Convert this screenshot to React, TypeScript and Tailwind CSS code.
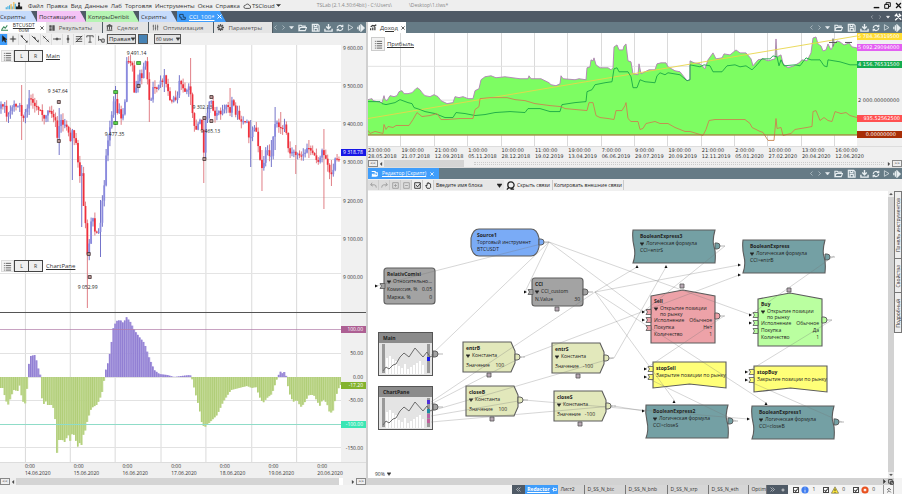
import clsx from 'clsx';
import type { ReactNode } from 'react';

type Point = [number, number];

const STEP = 1.883;
const PRICE_TOP = 45;
const PRICE_HEIGHT = 267;
const CCI_TOP = 313;
const CCI_HEIGHT = 149;
const CCI_ZERO = 377;

const GRID_X = [25, 70, 115, 161, 206, 252, 297];

const PRICE_PATH: Point[] = [
  [0, 107], [4, 104], [7, 118], [11, 110], [13, 105], [20, 107], [22, 119], [27, 112], [30, 94], [33, 103],
  [37, 108], [41, 110], [44, 119], [48, 110], [52, 112], [56, 121], [58, 141], [60, 118], [63, 125], [68, 127],
  [71, 141], [73, 127], [75, 144], [77, 143], [79, 178], [82, 172], [83, 211], [85, 201], [87, 258], [89, 250],
  [91, 224], [93, 218], [96, 238], [98, 230], [100, 237], [102, 202], [104, 197], [106, 161], [108, 136], [109, 146],
  [111, 114], [113, 113], [115, 92], [117, 112], [120, 111], [122, 123], [125, 108], [127, 60], [130, 61], [133, 65],
  [134, 95], [136, 88], [138, 82], [140, 71], [143, 80], [145, 58], [147, 63], [149, 103], [152, 98], [154, 84],
  [158, 89], [160, 79], [163, 82], [165, 74], [168, 91], [172, 104], [175, 95], [177, 102], [180, 79], [182, 83],
  [185, 90], [188, 90], [190, 83], [192, 105], [194, 117], [196, 133], [199, 121], [202, 120], [204, 159], [206, 119],
  [208, 115], [210, 101], [212, 99], [214, 110], [216, 117], [219, 109], [221, 117], [223, 110], [226, 106], [229, 106],
  [230, 117], [232, 100], [235, 109], [237, 116], [239, 109], [241, 125], [244, 120], [248, 123], [250, 143], [252, 132],
  [256, 125], [258, 140], [260, 150], [262, 170], [264, 168], [266, 152], [268, 150], [271, 160], [273, 150], [275, 126],
  [278, 124], [280, 128], [283, 128], [285, 125], [288, 138], [290, 155], [293, 150], [296, 156], [299, 152], [302, 158],
  [306, 151], [308, 148], [312, 151], [315, 153], [318, 162], [321, 160], [323, 151], [325, 157], [328, 162], [331, 175],
  [333, 172], [335, 168], [337, 155], [339, 164], [341, 150],
];

// x, high, low of the bars with a long shadow
const LONG_WICKS: [number, number, number][] = [
  [22, 85, 140], [30, 90, 115], [59, 108, 155], [73, 130, 180], [82, 165, 227], [88, 220, 308], [101, 200, 257],
  [115, 86, 125], [150, 80, 122], [165, 69, 92], [192, 58, 105], [205, 118, 183], [230, 88, 110], [252, 120, 167],
  [262, 150, 191], [272, 140, 167], [275, 107, 150], [281, 112, 134], [296, 145, 174], [309, 140, 158],
  [324, 129, 209], [332, 160, 186],
];

const CCI_PATH: Point[] = [
  [0, 388], [3, 388], [5, 396], [8, 406], [12, 395], [14, 390], [18, 391], [20, 385], [22, 397], [25, 406],
  [27, 395], [28, 378], [29, 365], [31, 356], [35, 355], [37, 361], [39, 370], [41, 376], [42, 397], [45, 406],
  [46, 401], [48, 405], [53, 405], [55, 413], [56, 423], [57, 457], [59, 440], [63, 440], [65, 442], [67, 438],
  [69, 435], [71, 442], [73, 432], [75, 436], [78, 447], [80, 443], [82, 445], [84, 434], [86, 430], [88, 420],
  [92, 408], [97, 405], [100, 400], [103, 391], [105, 378], [106, 371], [108, 365], [111, 350], [114, 328], [117, 321],
  [121, 320], [124, 323], [127, 317], [131, 322], [135, 330], [140, 337], [145, 343], [150, 358], [155, 370], [160, 374],
  [168, 375], [175, 377], [182, 376], [191, 375], [193, 379], [196, 392], [200, 408], [203, 425], [206, 427], [212, 421],
  [218, 415], [224, 402], [232, 390], [240, 388], [248, 386], [253, 388], [257, 387], [261, 398], [264, 403], [268, 398],
  [273, 394], [276, 385], [279, 376], [282, 371], [284, 374], [286, 371], [288, 379], [290, 392], [294, 402], [298, 400],
  [302, 407], [305, 404], [310, 395], [315, 395], [321, 406], [324, 399], [328, 403], [331, 413], [334, 412], [337, 397],
  [341, 385],
];

const EQUITY =
  '368,100 372,99 373,101 377,102 382,103 384,96 385,100 387,101 390,96 394,97 397,96 399,92 402,91 404,94 408,94 412,93 415,90 417,88 420,90 422,93 425,96 430,97 434,95 438,97 441,101 447,104 453,103 455,97 459,98 463,97 468,99 473,99 475,91 479,89 481,80 485,77 491,76 496,78 505,77 520,79 528,79 529,76 531,79 541,79 545,81 549,83 551,85 556,86 560,84 561,76 563,79 575,80 579,79 586,80 587,68 590,67 591,60 593,61 594,58 596,65 600,68 608,68 611,70 613,68 614,47 617,45 619,50 623,50 624,46 626,44 628,61 631,62 633,74 638,75 639,64 641,74 645,72 649,70 655,70 657,64 661,63 666,63 668,67 675,71 680,72 684,77 687,81 690,80 690,61 694,63 700,64 705,69 708,60 713,53 716,59 722,58 724,54 730,55 736,50 740,53 746,53 751,59 753,66 758,60 763,59 768,61 775,59 776,39 777,57 781,55 783,64 788,68 794,66 799,63 802,60 807,61 811,53 813,38 816,37 818,44 821,46 823,51 826,50 828,44 831,50 834,44 837,41 840,42 844,45 849,43 852,47 857,48';

const LONG_PROFIT =
  '368,102 380,102 382,104 386,105 395,103 400,100 408,103 412,104 414,108 420,110 425,112 435,114 445,118 453,118 456,113 465,114 475,116 485,115 495,113 510,112 525,113 528,109 540,109 550,112 560,112 562,105 575,103 586,102 587,92 592,90 595,85 605,83 612,82 614,69 617,68 619,72 628,72 631,77 633,88 637,88 640,80 645,82 655,83 657,76 660,73 665,75 668,73 680,75 687,81 690,80 690,65 700,67 704,65 710,66 713,72 722,72 727,66 735,65 740,67 746,66 752,70 757,65 762,59 770,59 773,56 777,57 779,66 781,60 784,66 795,65 800,66 806,58 811,60 820,60 824,66 827,67 828,60 840,62 850,65 857,65';

const SHORT_PROFIT =
  '368,131 370,134 375,132 383,134 384,125 386,130 388,127 393,128 396,126 409,126 413,120 417,113 422,117 430,116 437,114 441,120 447,120 460,119 473,119 475,110 479,107 480,99 490,98 507,98 515,100 525,101 535,104 550,106 561,107 565,109 587,111 589,103 593,103 596,116 600,118 608,119 614,120 616,111 622,111 625,106 626,103 628,119 631,122 638,122 640,130 643,129 646,124 655,122 660,124 668,124 675,128 685,132 690,132 703,136 706,130 709,121 715,120 730,120 745,120 750,124 752,128 760,132 763,133 768,141 774,141 776,119 777,129 781,128 783,136 791,134 795,130 807,128 812,127 813,112 816,111 820,121 824,118 828,121 832,122 835,112 841,114 846,113 850,116 857,118';

const DATES_LEFT = ['14.06.2020', '15.06.2020', '16.06.2020', '17.06.2020', '18.06.2020', '19.06.2020', '20.06.2020'];

const DATES_RIGHT = [
  ['23:00:00', '28.05.2018'], ['19:00:00', '21.07.2018'], ['21:00:00', '12.09.2018'], ['1:00:00', '05.11.2018'],
  ['10:00:00', '28.12.2018'], ['11:00:00', '19.02.2019'], ['19:00:00', '13.04.2019'], ['7:00:00', '06.06.2019'],
  ['9:00:00', '29.07.2019'], ['19:00:00', '20.09.2019'], ['21:00:00', '12.11.2019'], ['2:00:00', '05.01.2020'],
  ['10:00:00', '27.02.2020'], ['13:00:00', '20.04.2020'], ['16:00:00', '12.06.2020'],
];

const valueAt = (points: Point[], x: number) => {
  const next = points.findIndex(([px]) => px >= x);
  if (next <= 0) return points[next === 0 ? 0 : points.length - 1][1];
  const [x0, y0] = points[next - 1];
  const [x1, y1] = points[next];
  return y0 + ((y1 - y0) * (x - x0)) / (x1 - x0);
};

// cheap repeatable noise for the candle shadows
const noise = (i: number) => Math.abs(Math.sin(i * 12.9898) * 43758.5453) % 1;

const candles = Array.from({ length: 181 }, (_, i) => {
  const x = i * STEP + 1;
  const close = valueAt(PRICE_PATH, x) + (noise(i) - 0.5) * 4;
  const open = valueAt(PRICE_PATH, Math.max(0, x - STEP)) + (noise(i - 1) - 0.5) * 4;
  const wick = LONG_WICKS.find(([wx]) => Math.abs(wx - x) < STEP / 2);
  const top = Math.min(open, close);
  const bottom = Math.max(open, close);
  return {
    x,
    top,
    bottom,
    high: Math.min(top - noise(i + 40) * 7, wick ? wick[1] : 999),
    low: Math.max(bottom + noise(i + 80) * 7, wick ? wick[2] : 0),
    falling: close > open,
  };
});

const cciBars = Array.from({ length: 182 }, (_, i) => ({ x: i * STEP, y: valueAt(CCI_PATH, i * STEP + 1) }));

/* ---------- icons ---------- */

const Icon = ({ children, className, box = 10 }: { children: ReactNode; className?: string; box?: number }) => (
  <svg
    viewBox={`0 0 ${box} ${box}`}
    className={clsx('shrink-0', className ?? 'size-[9px]')}
    fill="none"
    stroke="currentColor"
    strokeWidth="1"
    aria-hidden="true"
  >
    {children}
  </svg>
);

const ListIcon = () => (
  <Icon className="size-[9px]">
    <path d="M1 1.5h1M1 4h1M1 6.5h1M1 9h1M3 1.5h6M3 4h6M3 6.5h6M3 9h6" />
  </Icon>
);

const PanelActions = () => (
  <div className="flex items-center gap-[3px] pr-[1px] text-[#e8eef1]">
    <button aria-label="Назад"><Icon className="size-[5px]"><path d="M7 1L3 5l4 4" /></Icon></button>
    <button aria-label="Вперёд"><Icon className="size-[5px]"><path d="M3 1l4 4-4 4" /></Icon></button>
    <button aria-label="Список"><Icon className="size-[5px]"><path d="M1 3h8L5 8z" fill="currentColor" /></Icon></button>
    <button aria-label="Открыть" className="ml-[1px]">
      <Icon><path d="M1 8.500V2.500h2.500l1 1H8V5M1 8.500L2.500 5h7L8 8.500z" strokeWidth="1.200" /></Icon>
    </button>
    <button aria-label="Сохранить" className="ml-[1px]">
      <Icon><path d="M1.500 1.500h6L9 3v6H1.500zM3.500 2v2h3V2M3.500 9V6h3.500v3" strokeWidth="1.300" /></Icon>
    </button>
    <button aria-label="Загрузить" className="ml-[1px]">
      <Icon><path d="M5 1v5M2.500 4L5 6.500 7.500 4M1 6.500v2.500h8V6.500" strokeWidth="1.500" /></Icon>
    </button>
    <button aria-label="Обновить">
      <Icon className="size-[8px]"><path d="M1.500 5A3.500 3.500 0 0 1 8 3.500M8.500 5A3.500 3.500 0 0 1 2 6.500M6 3.500h2.500V1M4 6.500H1.500V9" strokeWidth="1.400" /></Icon>
    </button>
    <button aria-label="Запустить"><Icon className="size-[7px]"><path d="M2 1l6.500 4L2 9z" /></Icon></button>
    <button aria-label="Режим агента">
      <Icon className="size-[8px]"><path d="M3 1.500v7M5 1l4 4-4 4zM1 3.500v3" fill="currentColor" strokeWidth="1.500" /></Icon>
    </button>
  </div>
);

/* ---------- common pieces ---------- */

const DocTab = ({ icon, children }: { icon: ReactNode; children: ReactNode }) => (
  <button className="flex items-center gap-[4px] border-r border-[#4f5b63] bg-[#e4e4e4] pr-[10px] pl-[3px] text-[#555]">
    {icon}
    {children}
  </button>
);

const ScrollRow = ({ children }: { children: ReactNode }) => (
  <div className="flex h-[7px] shrink-0 items-stretch bg-[#efefef] text-[5px] leading-none text-[#333]">
    <button className="w-[10px] border border-[#888]">&lt;&lt;</button>
    <button aria-label="Влево" className="flex w-[6px] items-center justify-center">
      <Icon className="size-[4px]"><path d="M7 1L3 5l4 4z" fill="currentColor" /></Icon>
    </button>
    {children}
    <button aria-label="Вправо" className="flex w-[6px] items-center justify-center">
      <Icon className="size-[4px]"><path d="M3 1l4 4-4 4z" fill="currentColor" /></Icon>
    </button>
    <button className="w-[10px] border border-[#888]">&gt;&gt;</button>
  </div>
);

const PaneHeader = ({ name }: { name: string }) => (
  <div className="flex items-center">
    <button aria-label="Список" className="flex h-[12px] w-[13px] items-center justify-center border border-[#ddd] bg-[#f4f4f4] text-[#555]">
      <ListIcon />
    </button>
    <button className="h-[12px] w-[15px] border border-[#444] bg-[#eee] text-[5px] leading-none">L</button>
    <button className="h-[12px] w-[14px] border border-l-0 border-[#444] bg-[#eee] text-[5px] leading-none">R</button>
    <a href="#pane" className="ml-[3px] underline">{name}</a>
  </div>
);

/* ---------- top bars ---------- */

const MENU = ['Файл', 'Правка', 'Вид', 'Данные', 'Лаб', 'Торговля', 'Инструменты', 'Окна', 'Справка'];

const TitleBar = () => (
  <header className="flex h-[11px] shrink-0 items-center bg-[#eeeeee] text-[#333]">
    <Icon box={26} className="h-[9px] w-[27px]">
      <path d="M-8 24v-6M-3 24v-9M2 24V12M9 24v-8" stroke="#2aa5dc" strokeWidth="3" />
      <path d="M6 24V9M14 24V3" stroke="#f0b23c" strokeWidth="3" />
      <path d="M18 24V8" stroke="#2aa5dc" strokeWidth="3" />
      <path d="M22 22h14v-4H22zM29 16V4M26 6h6M26 14h6" stroke="#222" strokeWidth="4" />
    </Icon>
    <nav className="ml-[1px] flex items-center gap-[3px] text-[6px] leading-none">
      {MENU.map((item) => (
        <button key={item}>{item}</button>
      ))}
      <button className="flex items-center gap-[1px]">
        <Icon className="size-[8px]"><path d="M3 8h5a1.500 1.500 0 0 0 0-3.500A2.500 2.500 0 0 0 3.300 4 2 2 0 0 0 3 8z" /></Icon>
        TSCloud
        <Icon className="size-[5px]"><path d="M1 3h8L5 7z" fill="currentColor" /></Icon>
      </button>
    </nav>
    <div className="ml-[36px] flex gap-[17px] text-[5px] leading-none text-[#888]">
      <span>TSLab (2.1.4.30:64bit) - C:\Users\</span>
      <span>\Desktop\1.tlws*</span>
    </div>
    <div className="ml-auto flex gap-[4px] text-[#111]">
      <button aria-label="Свернуть"><Icon className="size-[7px]"><path d="M1 8h8" strokeWidth="2" /></Icon></button>
      <button aria-label="Развернуть"><Icon className="size-[7px]"><path d="M1 3.500h5.500V9H1zM3 3V1h6v5.500H7" strokeWidth="1.400" /></Icon></button>
      <button aria-label="Закрыть"><Icon className="size-[7px]"><path d="M1.500 1.500l7 7M8.500 1.500l-7 7" strokeWidth="1.800" /></Icon></button>
    </div>
  </header>
);

const SLANT = '[clip-path:polygon(0_0,calc(100%-6px)_0,100%_100%,0_100%)]';

const WorkspaceTabs = () => (
  <div className="flex h-[11px] shrink-0 items-stretch bg-[#4f5a66] text-[6px] leading-none text-[#333]">
    <button className={clsx(SLANT, 'w-[37px] bg-[#c6dbfb] text-left')}>Скрипты</button>
    <button className={clsx(SLANT, 'w-[49px] bg-[#f4c3f6] pl-[2px] text-left')}>Поставщики</button>
    <button className={clsx(SLANT, 'w-[53px] bg-[#b6f4b4] pl-[2px] text-left')}>КотирыDeribit</button>
    <button className={clsx(SLANT, 'w-[38px] bg-[#c6dbfb] pl-[2px] text-left')}>Скрипты</button>
    <button className={clsx(SLANT, 'flex w-[49px] items-center gap-[3px] bg-[#3f9dfb] pl-[2px] text-white')}>
      <Icon className="size-[7px] text-[#123]"><path d="M1 2h5v4h3v3H3V6H1z" /></Icon>
      <span className="underline">CCI_100*</span>
      <Icon className="size-[5px]"><path d="M1 1l8 8M9 1L1 9" strokeWidth="2" /></Icon>
    </button>
    <div className="ml-auto flex items-center gap-[4px] text-white">
      <Icon className="size-[4px]"><path d="M7 1L3 5l4 4" /></Icon>
      <Icon className="size-[4px]"><path d="M3 1l4 4-4 4" /></Icon>
      <Icon className="size-[4px]"><path d="M1 3h8L5 8z" fill="currentColor" /></Icon>
      <button aria-label="Настройка">
        <Icon className="size-[8px]"><path d="M1.500 9L8 2.500M2 1.500L9 8.500M6 1l3 3M1 4l3-3" strokeWidth="1.600" /></Icon>
      </button>
    </div>
  </div>
);

/* ---------- left panel ---------- */

const TOOLS = [
  { name: 'Курсор', path: 'M3 1v7l2-2 1.500 3 1-.500L6 5.500h2.500z' },
  { name: 'Перекрестие', path: 'M5 1v3M5 6v3M1 5h3M6 5h3M4 4h2v2H4z' },
  { name: 'Отрезок', path: 'M1 1l8 8M1 1h2v2M7 9h2V7' },
  { name: 'Луч', path: 'M1 1l8 8M3 3l2 0 1 3M9 9V6' },
  { name: 'Прямая', path: 'M1 1l8 8M2 4l2-2M6 8l2-2' },
  { name: 'Горизонталь', path: 'M0 5h10M4 4h2v2H4z' },
  { name: 'Вертикаль', path: 'M5 0v10M4 4h2v2H4z' },
  { name: 'Фибоначчи', path: 'M1 2h8M1 5h8M1 8h8M1 9l8-8' },
  { name: 'Текст', path: 'M1 3V1h8v2M5 1v8M3 9h4' },
  { name: 'Выбор', path: 'M2 1v6l2-2 1.500 3M6 5h3v4H6z' },
];

const LeftToolbar = () => (
  <div className="flex h-[12px] shrink-0 items-center bg-[#f0f0f0] text-[6px] leading-none text-[#333]">
    {TOOLS.map(({ name, path }, i) => (
      <button
        key={name}
        aria-label={name}
        className={clsx(
          'flex h-[11px] items-center justify-center border-r border-[#ddd]',
          i === 0 ? 'w-[8px] bg-[#3f9dfb]' : 'w-[11px]',
        )}
      >
        <Icon className="size-[8px]"><path d={path} fill={i === 0 ? '#111' : 'none'} /></Icon>
      </button>
    ))}
    <div className="relative">
      <select aria-label="Шкала" className="h-[10px] w-[29px] appearance-none border border-[#555] bg-[#e3e3e3] pl-[1px] text-[6px] leading-none">
        <option>Правая</option>
      </select>
      <Icon className="pointer-events-none absolute top-[3px] right-[1px] size-[4px]"><path d="M0 2h10L5 9z" fill="currentColor" /></Icon>
    </div>
    <button aria-label="Цвет" className="ml-[2px] size-[10px] border border-[#555] bg-[#4682b4]" />
    <div className="relative ml-[6px]">
      <select aria-label="Интервал" className="h-[10px] w-[27px] appearance-none border border-[#555] bg-[#e3e3e3] pl-[1px] text-[5px] leading-none">
        <option>60 мин</option>
      </select>
      <Icon className="pointer-events-none absolute top-[3px] right-[1px] size-[4px]"><path d="M0 2h10L5 9z" fill="currentColor" /></Icon>
    </div>
  </div>
);

const MARKS = [
  { x: 48, y: 88, text: '9 347.64' },
  { x: 127, y: 50, text: '9 491.14' },
  { x: 105, y: 131, text: '9 477.35' },
  { x: 193, y: 104, text: '9 302.13' },
  { x: 201, y: 128, text: '9 465.13' },
  { x: 78, y: 284, text: '9 052.99' },
];

const PriceChart = () => (
  <div className="relative flex min-h-0 flex-[267] border-b border-[#555]">
    <svg viewBox={`0 ${PRICE_TOP} 342 ${PRICE_HEIGHT}`} preserveAspectRatio="none" className="h-full min-w-0 flex-1 bg-white">
      {GRID_X.map((x) => (
        <path key={x} d={`M${x}.5 0v400`} stroke="#dadada" />
      ))}
      {[82, 121, 159, 197, 235, 273].map((y) => (
        <path key={y} d={`M0 ${y}.5h342`} stroke="#e4e4e4" />
      ))}
      {candles.map(({ x, top, bottom, high, low, falling }) => (
        <g key={x}>
          <path d={`M${x} ${high}V${low}`} stroke={falling ? '#dc7078' : '#6464c4'} strokeWidth="0.9" />
          <rect
            x={x - 0.9}
            y={top}
            width="1.8"
            height={Math.max(1.2, bottom - top)}
            fill={falling ? '#f0303c' : '#8a8ade'}
          />
        </g>
      ))}
      {[[59, 102], [59, 141], [89, 254], [90, 277], [139, 86], [205, 118], [212, 97], [212, 121], [205, 159]].map(([x, y]) => (
        <path key={`${x}-${y}`} d={`M${x - 1.500} ${y - 1.500}h3v3h-3z`} fill="#b99" stroke="#433" strokeWidth="0.8" />
      ))}
      {[[116, 92], [116, 123], [139, 63]].map(([x, y]) => (
        <path key={`${x}-${y}`} d={`M${x - 2} ${y - 1.500}h4v3h-4z`} fill="#58d34c" stroke="#27731f" strokeWidth="0.7" />
      ))}
    </svg>
    <div className="absolute top-[5px] left-[1px] text-[6px] leading-none"><PaneHeader name="Main" /></div>
    <div className="absolute bottom-[40px] left-[1px] text-[6px] leading-none"><PaneHeader name="ChartPane" /></div>
    {MARKS.map(({ x, y, text }) => (
      <span
        key={text}
        className="absolute text-[5px] leading-[7px] whitespace-nowrap text-[#222]"
        style={{ left: `${(x / 367) * 100}%`, top: `${((y - PRICE_TOP) / PRICE_HEIGHT) * 100}%` }}
      >
        {text}
      </span>
    ))}
    <div className="relative flex w-[25px] flex-col bg-[#f0f0f0] text-[5px] leading-[7px] text-[#333]">
      {['9 600.00', '9 500.00', '9 400.00', '9 300.00', '9 200.00', '9 100.00', '9 000.00'].map((price) => (
        <span key={price} className="flex-1 pl-[2px]">{price}</span>
      ))}
      <span className="absolute top-[104px] left-0 w-full bg-[#1717e6] pl-[2px] text-white">9 318.78</span>
    </div>
  </div>
);

const CciChart = () => (
  <div className="flex min-h-0 flex-[149]">
    <svg viewBox={`0 ${CCI_TOP} 342 ${CCI_HEIGHT}`} preserveAspectRatio="none" className="h-full min-w-0 flex-1 bg-white">
      {GRID_X.map((x) => (
        <path key={x} d={`M${x}.5 300v200`} stroke="#dadada" />
      ))}
      {[353, 377, 400, 447].map((y) => (
        <path key={y} d={`M0 ${y}.5h342`} stroke="#e2e2e2" />
      ))}
      {cciBars.map(({ x, y }) => (
        <g key={x}>
          <rect
            x={x}
            y={Math.min(y, CCI_ZERO)}
            width={STEP}
            height={Math.abs(y - CCI_ZERO)}
            fill={y < CCI_ZERO ? '#a697dd' : '#c0d890'}
          />
          <rect
            x={x}
            y={Math.min(y, CCI_ZERO)}
            width="0.7"
            height={Math.abs(y - CCI_ZERO)}
            fill={y < CCI_ZERO ? '#8672cf' : '#a9c96c'}
          />
        </g>
      ))}
      <path d="M0 329.5h342" stroke="#b07aa8" strokeOpacity="0.7" />
      <path d="M0 424.5h342" stroke="#8fdcc8" />
    </svg>
    <div className="relative flex w-[25px] flex-col bg-[#f0f0f0] pt-[5px] pb-[2px] text-[5px] leading-[7px] text-[#333]">
      <span className="flex flex-1 items-center"><b className="w-full bg-[#ad5f93] pr-[3px] text-right font-normal text-white">100.00</b></span>
      <span className="flex flex-1 items-center justify-end pr-[3px]">50.00</span>
      <span className="flex flex-1 items-center justify-end pr-[3px]">0.00</span>
      <span className="flex flex-1 items-center justify-end pr-[3px]">-50.00</span>
      <span className="flex flex-1 items-center"><b className="w-full bg-[#3ae6b4] pr-[3px] text-right font-normal text-white">-100.00</b></span>
      <span className="flex flex-1 items-center justify-end pr-[3px]">-150.00</span>
      <span className="absolute top-[69px] left-0 w-full bg-[#84b32f] pr-[3px] text-right text-white">-17.20</span>
    </div>
  </div>
);

const LeftPanel = () => (
  <section className="flex min-h-0 min-w-0 flex-col border-r-2 border-[#d0d0d0]">
    <div className="flex h-[11px] shrink-0 items-stretch bg-[#667b86] text-[6px] leading-none">
      <button className="flex items-center gap-[3px] bg-white pr-[2px] pl-[1px] text-[#333]">
        <Icon className="size-[7px] text-[#3a8a5a]"><path d="M1 8l3-4 2 2 3-4M0 9h10" strokeWidth="1.500" /></Icon>
        <span className="text-[5px] underline">BTCUSDT 60M</span>
        <Icon className="size-[4px]"><path d="M1 1l8 8M9 1L1 9" strokeWidth="2" /></Icon>
      </button>
      <DocTab icon={<Icon className="size-[6px]"><path d="M1 1h3v3H1zM6 1h3v8H6zM1 6h3v3H1z" fill="currentColor" /></Icon>}>Результаты</DocTab>
      <DocTab icon={<Icon className="size-[7px]"><path d="M1 3l4-2 4 2zM2 4v4M5 4v4M8 4v4M1 9h8" strokeWidth="1.500" /></Icon>}>Сделки</DocTab>
      <DocTab icon={<Icon className="size-[7px]"><path d="M2 1v8M5 1v8M8 1v8M1 3h2M4 6h2M7 4h2" /></Icon>}>Оптимизация</DocTab>
      <DocTab icon={<Icon className="size-[7px]"><path d="M5 2.500a2.500 2.500 0 1 0 0 5 2.500 2.500 0 0 0 0-5zM5 0v2M5 8v2M0 5h2M8 5h2M1.500 1.500L3 3M7 7l1.500 1.500M8.500 1.500L7 3M3 7L1.500 8.500" strokeWidth="1.800" /></Icon>}>Параметры</DocTab>
      <div className="ml-auto flex"><PanelActions /></div>
    </div>
    <LeftToolbar />
    <PriceChart />
    <CciChart />
    <div className="grid h-[16px] shrink-0 grid-cols-7 border-t border-[#ddd] bg-[#f0f0f0] pl-[25px] text-[5px] leading-[7px] text-[#333]">
      {DATES_LEFT.map((date) => (
        <span key={date}>0:00<br />{date}</span>
      ))}
    </div>
    <ScrollRow>
      <div className="flex-1 bg-[#d4d4d4]" />
      <div className="w-[11px] border-l-4 border-white bg-[#efefef]" />
    </ScrollRow>
  </section>
);

/* ---------- equity panel ---------- */

const EquityPanel = () => (
  <section className="flex min-h-0 min-w-0 flex-[146] flex-col">
    <div className="flex h-[11px] shrink-0 items-stretch bg-[#667b86] text-[6px] leading-none">
      <button className="flex w-[38px] items-center gap-[3px] bg-white pl-[2px] text-[#333]">
        <Icon className="size-[7px]"><path d="M1 9V6M4 9V5M7 9V4M1 4l3-2 2 1 3-2" strokeWidth="1.700" /></Icon>
        <span className="underline">Доход</span>
        <Icon className="size-[4px]"><path d="M1 1l8 8M9 1L1 9" strokeWidth="2" /></Icon>
      </button>
      <div className="ml-auto flex"><PanelActions /></div>
    </div>
    <div className="relative flex min-h-0 flex-1">
      <svg viewBox="368 33 489 114" preserveAspectRatio="none" className="h-full min-w-0 flex-1 bg-white">
        {[400, 434, 467, 501, 534, 567, 601, 634, 667, 701, 734, 767, 801, 834].map((x) => (
          <path key={x} d={`M${x}.5 33v114`} stroke="#dadada" />
        ))}
        {[66, 100].map((y) => (
          <path key={y} d={`M368 ${y}.5h489`} stroke="#e2e2e2" />
        ))}
        <polygon points={`368,136 ${EQUITY} 857,136`} fill="#7dfd62" />
        <polyline points={EQUITY} fill="none" stroke="#b07fb4" strokeWidth="0.9" />
        <path d="M368 119L857 36" stroke="#e8d64a" strokeWidth="0.9" />
        <polyline points={LONG_PROFIT} fill="none" stroke="#1aa845" strokeWidth="0.9" />
        <polyline points={SHORT_PROFIT} fill="none" stroke="#c98450" strokeWidth="0.9" />
        <path d="M368 135.5h489" stroke="#b5603a" />
        <path d="M829 42.500h8M833 38.500v8M845 42.500h7" stroke="#555" />
      </svg>
      <button aria-label="Список" className="absolute top-[4px] left-[3px] flex size-[14px] items-center justify-center border border-[#ccc] bg-[#f2f2f2] text-[#555]">
        <ListIcon />
      </button>
      <a href="#profit" className="absolute top-[8px] left-[19px] text-[6px] leading-none underline">Прибыль</a>
      <div className="flex w-[45px] flex-col overflow-hidden bg-[#f0f0f0] font-[DejaVu_Sans,sans-serif] text-[5px] leading-[7px] whitespace-nowrap text-white">
        <span className="bg-[#ffdc32] pl-[1px]">5 784.36319500</span>
        <span className="mt-[4px] bg-[#e360f2] pl-[1px]">5 092.29094000</span>
        <span className="mt-[10px] bg-[#14ac4e] pl-[1px]">4 156.76531500</span>
        <span className="mt-[29px] pl-[1px] text-[#333]">2 000.00000000</span>
        <span className="mt-[11px] bg-[#ff5050] pr-[2px] text-right">935.52562500</span>
        <span className="mt-[9px] bg-[#a82e06] pr-[6px] text-right">0.00000000</span>
      </div>
    </div>
    <div className="grid h-[14px] shrink-0 grid-cols-16 overflow-hidden border-t border-[#ddd] bg-[#f0f0f0] font-[DejaVu_Sans,sans-serif] text-[5px] leading-[6px] whitespace-nowrap text-[#333]">
      {DATES_RIGHT.map(([time, date]) => (
        <span key={date}>{time}<br />{date}</span>
      ))}
    </div>
    <ScrollRow>
      <div className="w-[80px] bg-[#d4d4d4]" />
      <div className="m-[2px] ml-[10px] flex-1 border-y border-dotted border-[#ccc]" />
    </ScrollRow>
  </section>
);

/* ---------- script editor ---------- */

type Shape = 'pill' | 'card' | 'const' | 'tape' | 'house' | 'notch';

interface BlockNode {
  name: string;
  kind?: string;
  lines?: string[];
  params?: [string, string][];
  shape: Shape;
  x: number;
  y: number;
  w: number;
  h: number;
}

const formula = (name: string, text: string, x: number, y: number): BlockNode => ({
  name, kind: 'Логическая формула', lines: [text], shape: 'tape', x, y, w: 82, h: 33,
});

const constant = (name: string, value: string, x: number, y: number): BlockNode => ({
  name, kind: 'Константа', params: [['Значение', value]], shape: 'const', x, y, w: 52, h: 30,
});

const NODES: BlockNode[] = [
  { name: 'Source1', lines: ['Торговый инструмент', 'BTCUSDT'], shape: 'pill', x: 103, y: 38, w: 68, h: 27 },
  {
    name: 'RelativComisi', kind: 'Относительно...', params: [['Комиссия, %', '0.05'], ['Маржа, %', '0']],
    shape: 'card', x: 16, y: 77, w: 51, h: 36,
  },
  { name: 'CCI', kind: 'CCI_custom', params: [['N.Value', '30']], shape: 'card', x: 164, y: 87, w: 51, h: 28 },
  constant('entrB', '100', 95, 151),
  constant('entrS', '-100', 184, 152),
  constant('closeB', '100', 98, 195),
  constant('closeS', '-100', 186, 200),
  formula('BooleanExpress3', 'CCI<entrS', 265, 39),
  formula('BooleanExpress', 'CCI>entrB', 375, 49),
  formula('BooleanExpress2', 'CCI>closeS', 278, 214),
  formula('BooleanExpress1', 'CCI<closeB', 384, 215),
  {
    name: 'Sell', kind: 'Открытие позиции по рынку',
    params: [['Исполнение', 'Обычное'], ['Покупка', 'Нет'], ['Количество', '1']],
    shape: 'house', x: 283, y: 99, w: 64, h: 53,
  },
  {
    name: 'Buy', kind: 'Открытие позиции по рынку',
    params: [['Исполнение', 'Обычное'], ['Покупка', 'Да'], ['Количество', '1']],
    shape: 'house', x: 390, y: 102, w: 64, h: 53,
  },
  { name: 'stopSell', lines: ['Закрытие позиции по рынку'], shape: 'notch', x: 285, y: 171, w: 73, h: 26 },
  { name: 'stopBuy', lines: ['Закрытие позиции по рынку'], shape: 'notch', x: 386, y: 175, w: 73, h: 26 },
];

const FILLS: Record<Shape, string> = {
  pill: '#7aabf6',
  card: '#a3a3a3',
  const: '#e2e8bb',
  tape: '#74a0a4',
  house: '#eda2a8',
  notch: '#ffff78',
};

const outline = (shape: Shape, w: number, h: number) => {
  switch (shape) {
    case 'pill':
      return `M8 0H${w - 8}Q${w - 2} 0 ${w} 9V${h - 9}Q${w - 2} ${h} ${w - 8} ${h}H8Q2 ${h} 0 ${h - 9}V9Q2 0 8 0z`;
    case 'card':
      return `M3 0H${w - 3}Q${w} 0 ${w} 3V${h - 3}Q${w} ${h} ${w - 3} ${h}H3Q0 ${h} 0 ${h - 3}V3Q0 0 3 0z`;
    case 'const':
      return `M0 0H${w - 4}L${w} 9V${h - 9}L${w - 4} ${h}H0z`;
    case 'tape':
      return `M0 0H${w}Q${w - 3} ${h / 3} ${w - 1} ${h / 2}T${w} ${h}H0Q3 ${h * 0.75} 1 ${h / 2}T0 0z`;
    case 'house':
      return `M0 6L${w / 2} 0L${w} 6V${h}H0z`;
    case 'notch':
      return `M0 0H${w}V${h}L${w / 2} ${h - 4}L0 ${h}z`;
  }
};

const EDGES: [number, number, number, number][] = [
  [181, 51, 8, 95], [181, 51, 63, 164], [181, 51, 157, 101], [181, 51, 383, 124], [181, 51, 275, 121],
  [227, 101, 269, 76], [227, 101, 371, 74], [227, 101, 398, 212], [227, 101, 306, 209], [227, 101, 63, 211],
  [155, 166, 371, 84], [154, 166, 63, 213], [246, 167, 298, 76], [245, 167, 63, 220], [156, 209, 380, 228],
  [156, 209, 63, 225], [246, 215, 275, 220], [245, 215, 63, 231], [357, 55, 275, 121], [466, 65, 382, 124],
  [356, 125, 277, 178], [464, 129, 379, 181], [368, 230, 277, 186], [474, 231, 378, 189],
];

// input markers, pointing right
const INPUTS: Point[] = [
  [8, 95], [157, 101], [371, 74], [371, 84], [275, 121], [275, 129], [382, 124], [382, 132], [277, 178], [277, 186],
  [378, 181], [378, 189], [275, 220], [380, 228],
];

// input markers below and above a block
const VERTICAL_INPUTS: Point[] = [[269, 76], [298, 76], [306, 211], [398, 213]];

const INNER_PORTS: [number, number, Shape | 'buy'][] = [
  [12, 95, 'card'], [160, 101, 'card'], [278, 121, 'house'], [278, 129, 'house'], [278, 137, 'house'],
  [385, 124, 'buy'], [385, 132, 'buy'], [385, 140, 'buy'], [280, 178, 'notch'], [280, 186, 'notch'],
  [381, 181, 'notch'], [381, 189, 'notch'],
];

const SQUARE_PORTS: Point[] = [[187, 116], [119, 182], [208, 183], [122, 226], [210, 231], [312, 93], [419, 97]];

const OUTPUTS: [number, number, string][] = [
  [171, 51, '#7aabf6'], [215, 101, '#a3a3a3'], [147, 166, '#e2e8bb'], [236, 167, '#e2e8bb'], [150, 209, '#e2e8bb'],
  [238, 215, '#e2e8bb'], [347, 55, '#74a0a4'], [457, 66, '#74a0a4'], [347, 125, '#eda2a8'], [454, 129, '#baffa0'],
  [360, 230, '#74a0a4'], [466, 231, '#74a0a4'], [65, 163, '#a3a3a3'], [65, 216, '#a3a3a3'],
];

const portFill = (shape: Shape | 'buy') => (shape === 'buy' ? '#baffa0' : FILLS[shape]);

const Block = ({ node }: { node: BlockNode }) => (
  <article className="absolute" style={{ left: node.x, top: node.y, width: node.w, height: node.h }}>
    <svg viewBox={`0 0 ${node.w} ${node.h}`} className="absolute inset-0 size-full overflow-visible" aria-hidden="true">
      <path
        d={outline(node.shape, node.w, node.h)}
        fill={node.name === 'Buy' ? '#baffa0' : FILLS[node.shape]}
        stroke="#5c5c5c"
        strokeWidth="1.1"
      />
    </svg>
    <div
      className={clsx(
        'relative text-[5px] leading-[7px] text-[#222]',
        node.shape === 'house' ? 'px-[3px] pt-[8px]' : node.shape === 'tape' ? 'px-[7px] pt-[3px]' : 'px-[3px] pt-[3px]',
        node.shape === 'pill' && 'pl-[6px]',
      )}
    >
      <h3 className="font-bold whitespace-nowrap">{node.name}</h3>
      {node.kind && (
        <p className="flex gap-[2px]">
          <Icon className="mt-[2px] size-[4px]"><path d="M0 2h10L5 9z" fill="currentColor" /></Icon>
          <span className={node.shape === 'house' ? 'leading-[6px]' : 'whitespace-nowrap'}>{node.kind}</span>
        </p>
      )}
      {node.lines?.map((line) => (
        <p key={line} className="whitespace-nowrap">{line}</p>
      ))}
      {node.params?.map(([label, value]) => (
        <p key={label} className={clsx('flex justify-between whitespace-nowrap', node.shape !== 'house' && 'pt-[1px]', node.shape === 'const' && 'pt-[3px] pr-[8px]')}>
          <span>{label}</span>
          <span>{value}</span>
        </p>
      ))}
    </div>
  </article>
);

const PanePreview = ({ name, x, y, ports }: { name: string; x: number; y: number; ports: [number, string][] }) => (
  <article className="absolute flex h-[44px] w-[55px] flex-col border border-[#555] bg-[#e4e4e4]" style={{ left: x, top: y }}>
    <h3 className="h-[10px] bg-[#8b8b8b] pl-[4px] text-[5px] leading-[10px] font-bold text-[#222]">{name}</h3>
    <svg viewBox="0 0 53 32" className="min-h-0 flex-1" aria-hidden="true">
      <path d="M3 1h3v29H3zM48 1h3v29h-3z" fill="#999" />
      <path
        d="M8 31V15M11 31V13M14 31V16M17 31V18M20 31V23M23 31V25M26 31V21M29 31V26M32 31V24M35 31V22M38 31V20M41 31V18M44 31V22"
        stroke="#fff"
        strokeWidth="2"
      />
      <path d="M4 28l3-4 3 2 4-4 3-1 4-7 4-4 5 4 6-9 8 9 4-5 3 5 2-1" fill="none" stroke="#6c6c6c" />
      {ports.map(([py, fill]) => (
        <rect key={py} x="48" y={py} width="3" height="4" fill={fill} />
      ))}
    </svg>
  </article>
);

const Diagram = () => (
  <div className="relative min-w-0 flex-1 overflow-hidden bg-white">
    <PanePreview name="Main" x={10} y={141} ports={[[14, '#1818f0']]} />
    <PanePreview
      name="ChartPane"
      x={10}
      y={195}
      ports={[[3, '#5030d8'], [12, '#1f8aa5'], [17, '#b964a5'], [22, '#c05f9a']]}
    />
    {NODES.map((node) => (
      <Block key={node.name} node={node} />
    ))}
    <svg className="absolute inset-0 size-full" aria-hidden="true">
      {EDGES.map(([x1, y1, x2, y2]) => (
        <path key={`${x1}-${y1}-${x2}-${y2}`} d={`M${x1} ${y1}L${x2} ${y2}`} stroke="#777" strokeOpacity="0.5" strokeWidth="0.6" />
      ))}
      {OUTPUTS.map(([x, y, fill]) => (
        <g key={`${x}-${y}`}>
          <path d={`M${x + 4} ${y}h6`} stroke="#999" strokeWidth="0.7" />
          <path d={`M${x} ${y - 3}h2a3 3 0 0 1 0 6h-2z`} fill={fill} stroke="#555" strokeWidth="0.9" />
        </g>
      ))}
      {INNER_PORTS.map(([x, y, shape]) => (
        <path key={`${x}-${y}`} d={`M${x} ${y - 2.500}h5v5h-5l1.500 -2.500z`} fill={portFill(shape)} stroke="#555" strokeWidth="0.8" />
      ))}
      {SQUARE_PORTS.map(([x, y]) => (
        <path key={`${x}-${y}`} d={`M${x} ${y}h4v4h-4z`} fill="#b8a8b4" stroke="#555" strokeWidth="0.8" />
      ))}
      {INPUTS.map(([x, y]) => (
        <path key={`${x}-${y}`} d={`M${x - 1} ${y - 1.500}l3 1.500l-3 1.500z`} fill="#111" />
      ))}
      {VERTICAL_INPUTS.map(([x, y]) => (
        <path key={`${x}-${y}`} d={`M${x - 1.500} ${y + 1}l1.500 -3l1.500 3z`} fill="#111" />
      ))}
    </svg>
    <label className="absolute bottom-0 left-[7px] flex items-center gap-[2px] text-[5px] leading-[8px] text-[#333]">
      90%
      <Icon className="size-[4px]"><path d="M0 2h10L5 9z" fill="currentColor" /></Icon>
    </label>
  </div>
);

const EDITOR_TOOLS = [
  { name: 'Отменить', path: 'M3 1L1 4l3 2M1 4h5q3 0 3 4', on: false },
  { name: 'Повторить', path: 'M7 1l2 3-3 2M9 4H4Q1 4 1 8', on: false },
  { name: 'Группа', path: 'M1 1h8v8H1zM3 5h4M5 3v4', on: false },
  { name: 'Разгруппировать', path: 'M1 1h8v8H1zM3 5h4', on: false },
  { name: 'Проверка', path: 'M1 1h8v8H1zM3 4l2 3 4-5', on: true },
  { name: 'Рука', path: 'M3 9L1 5h2V2h1V1h1v1h2v1h1v5l-1 1z', on: true },
];

const EditorPanel = () => (
  <section className="flex min-h-0 min-w-0 flex-[318] flex-col border-t border-[#ddd]">
    <div className="flex h-[11px] shrink-0 items-stretch bg-[#667b86] text-[6px] leading-none">
      <button className="flex w-[71px] items-center gap-[4px] bg-[#3f9dfb] pl-[3px] text-white">
        <Icon className="size-[7px]"><path d="M1 2h5v2h3v4H2V6h5M1 9h7" strokeWidth="1.500" /></Icon>
        <span className="text-[5px] underline">Редактор (Скрипт)</span>
        <Icon className="size-[4px]"><path d="M1 1l8 8M9 1L1 9" strokeWidth="2" /></Icon>
      </button>
      <div className="ml-auto flex"><PanelActions /></div>
    </div>
    <div className="flex h-[12px] shrink-0 items-center bg-[#f0f0f0] text-[5px] leading-none text-[#222]">
      {EDITOR_TOOLS.map(({ name, path, on }) => (
        <button
          key={name}
          aria-label={name}
          className={clsx('flex h-[10px] w-[11px] items-center justify-center border-r border-[#ccc]', on ? 'text-[#222]' : 'bg-[#ddd] text-[#999]')}
        >
          <Icon className="size-[7px]"><path d={path} strokeWidth="1.200" /></Icon>
        </button>
      ))}
      <div className="relative">
        <select aria-label="Блок" className="h-[10px] w-[70px] appearance-none bg-[#e6e6e6] pl-[2px] text-[5px] leading-none">
          <option>Введите имя блока</option>
        </select>
        <Icon className="pointer-events-none absolute top-[3px] right-[2px] size-[5px]"><path d="M0 2h10L5 9z" fill="currentColor" /></Icon>
      </div>
      <button aria-label="Найти" className="ml-[2px]">
        <Icon><path d="M5.500 1a3 3 0 1 1 0 7 3 3 0 0 1 0-7zM3 7L1 9.500M5 9h4" strokeWidth="1.400" /></Icon>
      </button>
      <button className="h-[10px] border-r border-[#ccc] px-[2px]">Скрыть связи</button>
      <button className="h-[10px] border-r border-[#ccc] px-[1px]">Копировать внешние связи</button>
    </div>
    <div className="flex min-h-0 flex-1">
      <Diagram />
      <div className="flex w-[6px] flex-col items-center justify-between bg-[#d2d2d2] text-[#333]">
        <Icon className="size-[6px] bg-[#eee]"><path d="M3 6h4L5 4z" fill="currentColor" /></Icon>
        <Icon className="size-[6px] bg-[#eee]"><path d="M3 4h4L5 6z" fill="currentColor" /></Icon>
      </div>
      <div className="flex w-[8px] flex-col bg-white text-[5px] leading-[7px] whitespace-nowrap text-[#333]">
        <button className="h-[68px] w-full border border-[#777] bg-[#eee] [writing-mode:sideways-lr]">Панель инструментов</button>
        <button className="h-[34px] w-full border border-t-0 border-[#777] bg-[#eee] [writing-mode:sideways-lr]">Свойства</button>
        <button className="h-[40px] w-full border border-t-0 border-[#777] bg-[#eee] [writing-mode:sideways-lr]">Подробный</button>
      </div>
    </div>
    <div className="mr-[8px] flex h-[7px] shrink-0 items-center justify-end gap-[1px] bg-[#d2d2d2] text-[#333]">
      <Icon className="size-[5px]"><path d="M3 1l4 4-4 4z" fill="currentColor" /></Icon>
      <Icon className="size-[6px]"><path d="M1 1h6v6H1zM4 4h5v5H4z" strokeWidth="1.400" /></Icon>
    </div>
  </section>
);

/* ---------- status bar ---------- */

interface CounterProps {
  id: string;
  label: string;
  value: number;
  icon: ReactNode;
}

const Counter = ({ id, label, value, icon }: CounterProps) => (
  <label htmlFor={id} className="relative flex items-center gap-[2px]">
    <input id={id} type="checkbox" defaultChecked aria-label={label} className="size-[6px] appearance-none border border-[#444] bg-white" />
    <Icon className="pointer-events-none absolute left-0 size-[6px]"><path d="M2.500 5l2 2.500 3.500-5" strokeWidth="1.700" /></Icon>
    {icon}
    <span className="pl-[1px]">{value}</span>
  </label>
);

const SHEETS = [
  { name: 'Лист2', width: 'w-[27px]' },
  { name: 'D_SS_N_btc', width: 'w-[41px]' },
  { name: 'D_SS_N_bnb', width: 'w-[42px]' },
  { name: 'D_SS_N_xrp', width: 'w-[41px]' },
  { name: 'D_SS_N_eth', width: 'w-[40px]' },
  { name: 'Optim', width: 'w-[18px]' },
];

const StatusBar = () => (
  <footer className="flex h-[9px] shrink-0 items-stretch justify-end bg-[#f3f3f3] text-[5px] leading-none text-[#333]">
    <button aria-label="Первый лист" className="flex w-[13px] items-center justify-center bg-[#4f5a66] text-white">
      <Icon className="size-[5px]"><path d="M5 1L1 5l4 4M9 1L5 5l4 4" /></Icon>
    </button>
    <button className="flex w-[33px] items-center justify-center gap-[2px] bg-[#3f9dfb] font-bold text-white">
      <span className="underline">Redactor</span>
      <Icon className="size-[5px]"><path d="M0 5h3M3 1v8M3 3h6v4H3" strokeWidth="1.500" /></Icon>
    </button>
    {SHEETS.map(({ name, width }) => (
      <button key={name} className={clsx(width, 'overflow-hidden border-r border-[#777] bg-[#d6d6d6] pl-[2px] text-left')}>
        {name}
      </button>
    ))}
    <div className="flex w-[21px] items-center justify-around bg-[#4f5a66] text-white">
      <button aria-label="Последний лист"><Icon className="size-[5px]"><path d="M1 1l4 4-4 4M5 1l4 4-4 4" /></Icon></button>
      <button aria-label="Добавить лист"><Icon className="size-[4px]"><path d="M5 1v8M1 5h8" strokeWidth="1.600" /></Icon></button>
    </div>
    <div className="ml-[5px] flex items-center gap-[8px]">
      <Counter
        id="info"
        label="Сообщения"
        value={1}
        icon={<Icon className="size-[8px]"><circle cx="5" cy="5" r="4.500" fill="#3f7df0" stroke="none" /><path d="M5 4.500V8M5 2v1" stroke="#fff" /></Icon>}
      />
      <Counter
        id="warnings"
        label="Предупреждения"
        value={0}
        icon={<Icon className="size-[8px]"><path d="M5 1l4.500 8h-9z" fill="#ffe93b" stroke="#554" strokeWidth="0.700" /><path d="M5 3.500v3M5 7.500v1" stroke="#222" /></Icon>}
      />
      <Counter
        id="errors"
        label="Ошибки"
        value={0}
        icon={<Icon className="size-[8px]"><circle cx="5" cy="5" r="4.500" fill="#e8501e" stroke="none" /><path d="M3.500 3.500l3 3M6.500 3.500l-3 3" stroke="#fff" strokeWidth="1.300" /></Icon>}
      />
    </div>
    <button aria-label="Показать журнал" className="mr-[8px] ml-[8px] flex w-[11px] items-center justify-center border-x border-[#999]">
      <Icon className="size-[6px]"><path d="M2 5l3-3 3 3M2 9l3-3 3 3" strokeWidth="1.300" /></Icon>
    </button>
  </footer>
);

const App = () => (
  <div className="flex h-screen flex-col overflow-hidden bg-[#f3f3f3] font-['Open_Sans','Noto_Sans',sans-serif] text-[#333]">
    <TitleBar />
    <WorkspaceTabs />
    <main className="grid min-h-0 flex-1 grid-cols-[minmax(0,368fr)_minmax(0,534fr)]">
      <LeftPanel />
      <div className="flex min-h-0 min-w-0 flex-col">
        <EquityPanel />
        <EditorPanel />
      </div>
    </main>
    <StatusBar />
  </div>
);

export default App;
